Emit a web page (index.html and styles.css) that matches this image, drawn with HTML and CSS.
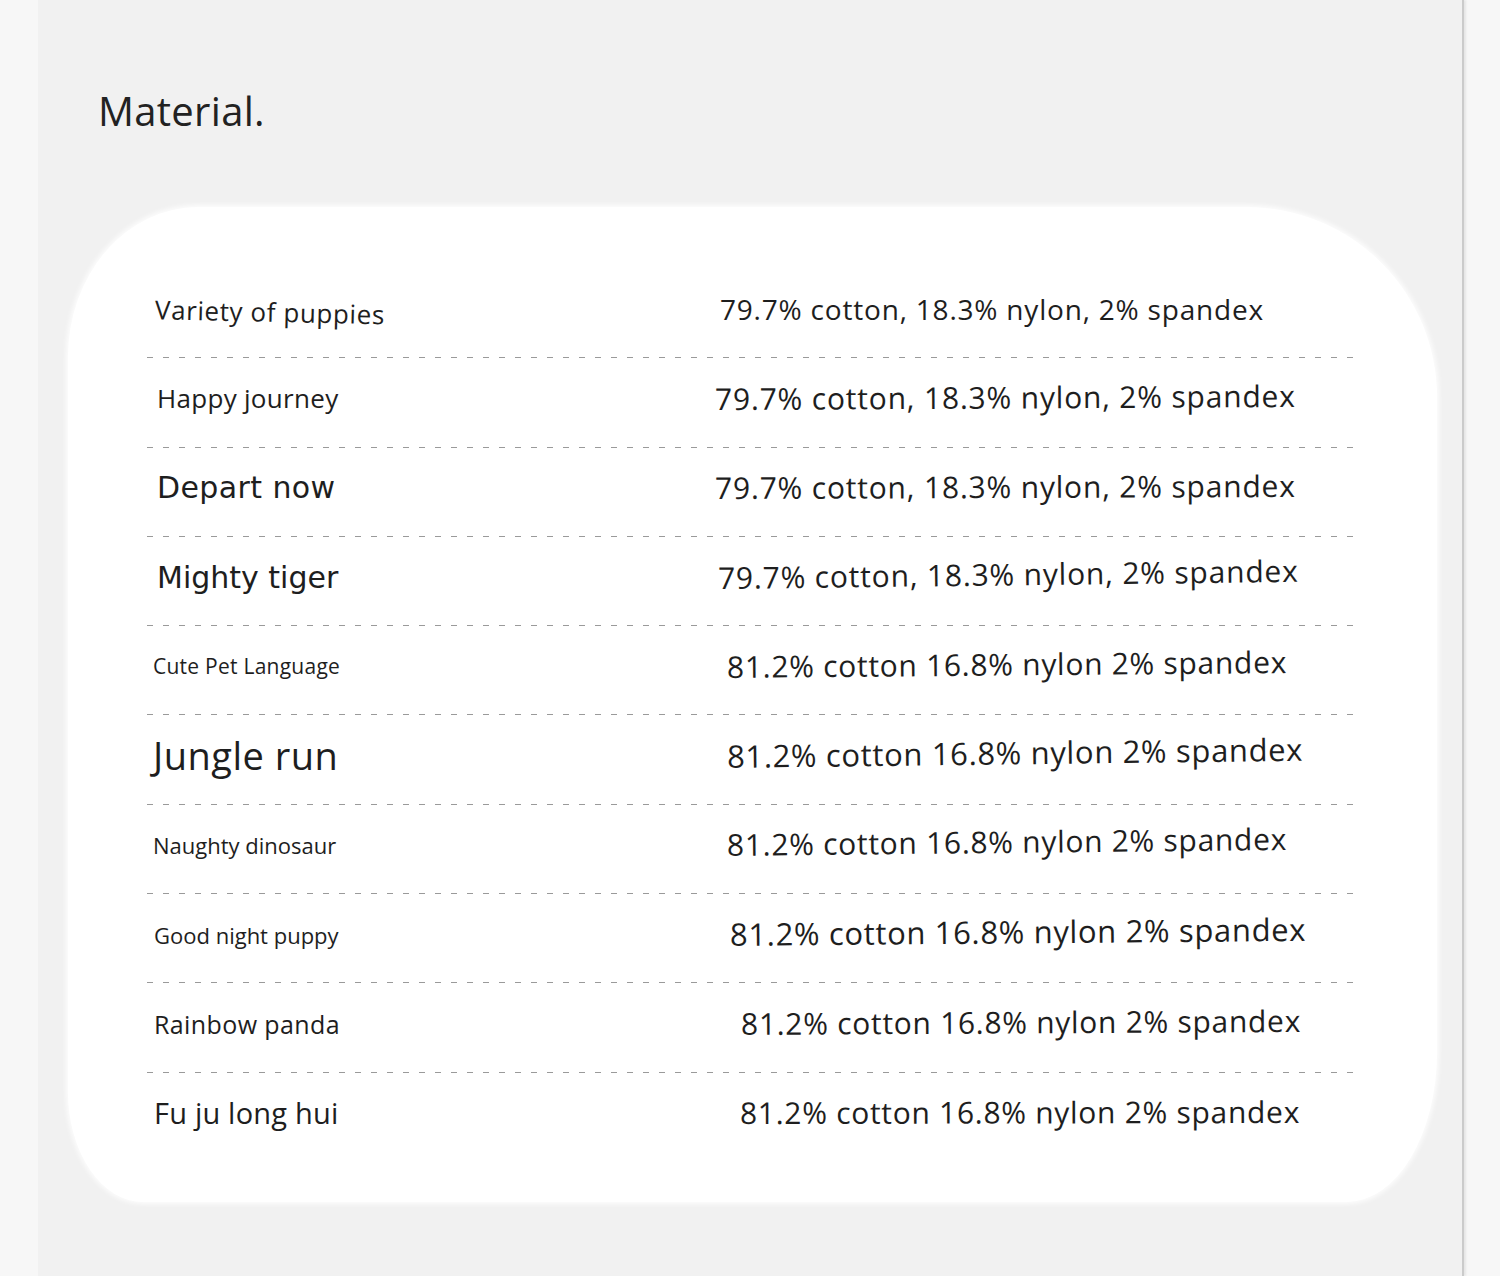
FILE: index.html
```html
<!DOCTYPE html>
<html lang="en">
<head>
<meta charset="utf-8">
<title>Material</title>
<link rel="stylesheet" href="styles.css">
</head>
<body>
<div class="panel">
  <h1 class="title">Material.</h1>
  <div class="card">
    <div class="table">
      <div class="row r1"><span class="name">Variety of puppies</span><span class="comp">79.7% cotton, 18.3% nylon, 2% spandex</span></div>
      <div class="sep"></div>
      <div class="row r2"><span class="name">Happy journey</span><span class="comp">79.7% cotton, 18.3% nylon, 2% spandex</span></div>
      <div class="sep"></div>
      <div class="row r3"><span class="name">Depart now</span><span class="comp">79.7% cotton, 18.3% nylon, 2% spandex</span></div>
      <div class="sep"></div>
      <div class="row r4"><span class="name">Mighty tiger</span><span class="comp">79.7% cotton, 18.3% nylon, 2% spandex</span></div>
      <div class="sep"></div>
      <div class="row r5"><span class="name">Cute Pet Language</span><span class="comp">81.2% cotton 16.8% nylon 2% spandex</span></div>
      <div class="sep"></div>
      <div class="row r6"><span class="name">Jungle run</span><span class="comp">81.2% cotton 16.8% nylon 2% spandex</span></div>
      <div class="sep"></div>
      <div class="row r7"><span class="name">Naughty dinosaur</span><span class="comp">81.2% cotton 16.8% nylon 2% spandex</span></div>
      <div class="sep"></div>
      <div class="row r8"><span class="name">Good night puppy</span><span class="comp">81.2% cotton 16.8% nylon 2% spandex</span></div>
      <div class="sep"></div>
      <div class="row r9"><span class="name">Rainbow panda</span><span class="comp">81.2% cotton 16.8% nylon 2% spandex</span></div>
      <div class="sep"></div>
      <div class="row r10"><span class="name">Fu ju long hui</span><span class="comp">81.2% cotton 16.8% nylon 2% spandex</span></div>
    </div>
  </div>
</div>
</body>
</html>
```

FILE: styles.css
```css
html, body {
  margin: 0;
  padding: 0;
}
body {
  background: #f7f7f7;
  font-family: "Open Sans", "Noto Sans", sans-serif;
  color: #1e1e1e;
  overflow: hidden;
}
.panel {
  width: 1426px;
  min-height: 1276px;
  margin-left: 38px;
  background: #f1f1f1;
  padding-top: 91px;
  box-sizing: border-box;
  border-right: 2px solid #cbcbcb;
  box-shadow: 2px 0 2px rgba(0, 0, 0, 0.07);
}
.title {
  margin: 0 0 76px 60px;
  font-family: "Open Sans", sans-serif;
  font-weight: 400;
  font-size: 40px;
  letter-spacing: 0.3px;
  line-height: 1;
  color: #222;
}
.card {
  margin-left: 30px;
  width: 1369px;
  background: #fff;
  border-radius: 130px 190px 90px 75px / 150px 190px 150px 110px;
  box-shadow: 0 0 5px 2px rgba(255, 255, 255, 0.85);
  padding: 62px 82px 41px 79px;
  box-sizing: border-box;
}
.table {
  display: flex;
  flex-direction: column;
}
.row {
  height: 88.3px;
  box-sizing: border-box;
  padding-bottom: 7px;
  display: grid;
  grid-template-columns: 568px 1fr;
  align-items: center;
  white-space: nowrap;
}
.sep {
  height: 1px;
  background: repeating-linear-gradient(90deg, #9a9a9a 0 6px, transparent 6px 16px);
}
.name {
  display: block;
  padding-left: 8px;
  font-size: 25px;
  line-height: 1.2;
}
.comp {
  display: block;
  font-size: 30px;
  letter-spacing: 0.8px;
  line-height: 1.2;
  transform-origin: left center;
}

.r1 .name { font-size: 26px; letter-spacing: 0.6px; padding-left: 8px; transform: rotate(1.3deg); transform-origin: left center; }
.r1 .comp { font-size: 28px; padding-left: 5px; }
.r2 .name { font-size: 26px; letter-spacing: 0.3px; padding-left: 10px; }
.r2 .comp { padding-left: 0; transform: rotate(-0.3deg); }
.r3 .name { font-family: "DejaVu Sans", sans-serif; font-size: 30px; letter-spacing: 0.4px; padding-left: 10px; }
.r3 .comp { padding-left: 0; transform: rotate(-0.2deg); }
.r4 .name { font-family: "DejaVu Sans", sans-serif; font-size: 30px; padding-left: 10px; }
.r4 .comp { padding-left: 3px; transform: rotate(-0.7deg); }
.r5 .name { font-size: 21px; letter-spacing: 0.25px; padding-left: 6px; }
.r5 .comp { padding-left: 12px; letter-spacing: 0.7px; transform: rotate(-0.5deg); }
.r6 .name { font-size: 38px; letter-spacing: 0.5px; padding-left: 6px; }
.r6 .comp { padding-left: 12px; font-size: 31px; letter-spacing: 0.65px; transform: rotate(-0.7deg); }
.r7 .name { font-size: 22px; padding-left: 6px; }
.r7 .comp { padding-left: 12px; letter-spacing: 0.7px; transform: rotate(-0.6deg); }
.r8 .name { font-size: 22px; padding-left: 7px; }
.r8 .comp { padding-left: 15px; font-size: 31px; letter-spacing: 0.65px; transform: rotate(-0.5deg); }
.r9 .name { font-size: 25px; letter-spacing: 0.4px; padding-left: 7px; }
.r9 .comp { padding-left: 26px; letter-spacing: 0.7px; transform: rotate(-0.3deg); }
.r10 .name { font-size: 29px; letter-spacing: 0.2px; padding-left: 7px; }
.r10 .comp { padding-left: 25px; letter-spacing: 0.7px; transform: rotate(-0.1deg); }
```
